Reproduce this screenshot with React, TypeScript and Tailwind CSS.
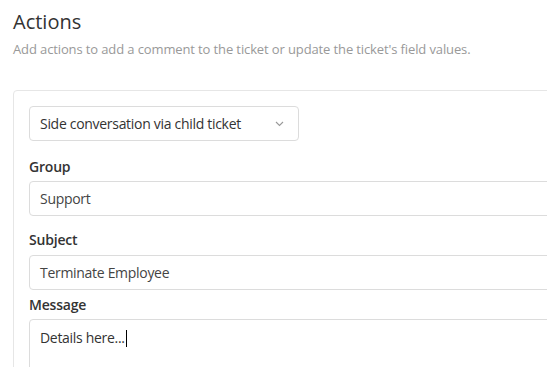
export default function App() {
  const font = { fontFamily: '"Open Sans", "Noto Sans", sans-serif' };

  return (
    <div
      className="w-[547px] h-[367px] overflow-hidden bg-white text-[#333]"
      style={font}
    >
      <div className="pl-[13px] pt-[8px]">
        {/* Header */}
        <h2 className="text-[20px] leading-[28px] font-normal text-[#333]">Actions</h2>
        <p className="mt-[3px] text-[13px] leading-[20px] tracking-[-0.12px] text-[#999]">
          Add actions to add a comment to the ticket or update the ticket's field values.
        </p>

        {/* Action card */}
        <div className="mt-[31px] w-[620px] rounded-[4px] border border-[#e6e6e6] p-[15px]">
          <div className="flex h-[35px] w-[270px] items-center justify-between rounded-[4px] border border-[#dcdcdc] pl-[10px] pr-[14px]">
            <span className="text-[14px] tracking-[-0.3px] text-[#333]">Side conversation via child ticket</span>
            <svg width="9" height="6" viewBox="0 0 9 6" fill="none">
              <polyline points="1,1 4.5,4.5 8,1" stroke="#999" strokeWidth="1.1" />
            </svg>
          </div>

          <label className="mt-[16px] block text-[14px] leading-[20px] font-semibold tracking-[-0.2px] text-[#333]">Group</label>
          <div className="mt-[4px] flex h-[35px] items-center rounded-[4px] border border-[#dcdcdc] px-[10px] text-[14px] tracking-[-0.3px] text-[#444]">
            Support
          </div>

          <label className="mt-[14px] block text-[14px] leading-[20px] font-semibold tracking-[-0.2px] text-[#333]">Subject</label>
          <div className="mt-[5px] flex h-[35px] items-center rounded-[4px] border border-[#dcdcdc] px-[10px] text-[14px] tracking-[-0.3px] text-[#444]">
            Terminate Employee
          </div>

          <label className="mt-[5px] block text-[14px] leading-[20px] font-semibold tracking-[-0.2px] text-[#333]">Message</label>
          <div className="mt-[4px] h-[90px] rounded-[4px] border border-[#dcdcdc] px-[10px] pt-[8px] text-[14px] leading-[20px] tracking-[-0.3px] text-[#333]">
            Details here...
            <span className="ml-[1px] inline-block h-[17px] w-[1px] bg-black align-[-4px]" />
          </div>
        </div>
      </div>
    </div>
  );
}
